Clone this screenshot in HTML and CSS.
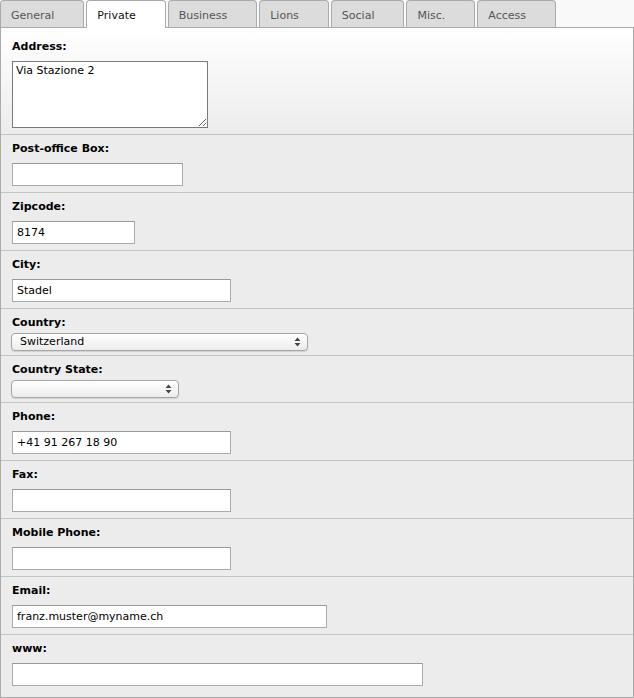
FILE: index.html
```html
<!DOCTYPE html>
<html>
<head>
<meta charset="utf-8">
<link rel="stylesheet" href="styles.css">
</head>
<body>
<div class="tabs">
  <div class="tab">General</div>
  <div class="tab active">Private</div>
  <div class="tab">Business</div>
  <div class="tab">Lions</div>
  <div class="tab">Social</div>
  <div class="tab">Misc.</div>
  <div class="tab">Access</div>
</div>
<div class="panel">
  <div class="row row-first">
    <label class="lbl">Address:</label>
    <textarea class="area">Via Stazione 2</textarea>
  </div>
  <div class="row">
    <label class="lbl">Post-office Box:</label>
    <input class="inp w-pob" type="text" value="">
  </div>
  <div class="row">
    <label class="lbl">Zipcode:</label>
    <input class="inp w-zip" type="text" value="8174">
  </div>
  <div class="row">
    <label class="lbl">City:</label>
    <input class="inp w-mid" type="text" value="Stadel">
  </div>
  <div class="row row-sel">
    <label class="lbl">Country:</label>
    <div class="sel w-country">
      <span class="sel-text">Switzerland</span>
      <svg class="sel-arrows" width="7" height="10" viewBox="0 0 7 10"><path d="M3.5 0.5 L6.5 4 L0.5 4 Z M0.5 6 L6.5 6 L3.5 9.5 Z" fill="#444"/></svg>
    </div>
  </div>
  <div class="row row-sel">
    <label class="lbl">Country State:</label>
    <div class="sel w-state">
      <span class="sel-text"></span>
      <svg class="sel-arrows" width="7" height="10" viewBox="0 0 7 10"><path d="M3.5 0.5 L6.5 4 L0.5 4 Z M0.5 6 L6.5 6 L3.5 9.5 Z" fill="#444"/></svg>
    </div>
  </div>
  <div class="row">
    <label class="lbl">Phone:</label>
    <input class="inp w-mid" type="text" value="+41 91 267 18 90">
  </div>
  <div class="row">
    <label class="lbl">Fax:</label>
    <input class="inp w-mid" type="text" value="">
  </div>
  <div class="row">
    <label class="lbl">Mobile Phone:</label>
    <input class="inp w-mid" type="text" value="">
  </div>
  <div class="row">
    <label class="lbl">Email:</label>
    <input class="inp w-email" type="text" value="franz.muster@myname.ch">
  </div>
  <div class="row row-last">
    <label class="lbl">www:</label>
    <input class="inp w-www" type="text" value="">
  </div>
</div>
</body>
</html>
```
FILE: styles.css
```css
html, body {
  margin: 0;
  padding: 0;
  background: #f9f9f9;
  font-family: "DejaVu Sans", Verdana, sans-serif;
  font-size: 11px;
}

.tabs {
  display: flex;
  align-items: flex-end;
  gap: 2px;
  height: 27px;
  padding-left: 0;
}

.tab {
  box-sizing: border-box;
  height: 27px;
  padding: 2px 29px 0 10px;
  border: 1px solid #aaa;
  border-bottom: none;
  border-radius: 4px 4px 0 0;
  background: #dcdcdc;
  color: #555;
  line-height: 25px;
  font-size: 11px;
}

.tab.active {
  position: relative;
  z-index: 2;
  height: 28px;
  margin-bottom: -1px;
  background: #fff;
  color: #111;
}

.panel {
  box-sizing: border-box;
  width: 634px;
  border: 1px solid #aaa;
  background: #ececec;
}

.row {
  display: flex;
  flex-direction: column;
  align-items: flex-start;
  padding: 7px 11px 6px 11px;
  border-top: 1px solid #c3c3c3;
}

.row-first {
  border-top: none;
  padding-top: 12px;
  background: linear-gradient(to bottom, #ffffff 0%, #ececec 100%);
}

.row-sel {
  padding-bottom: 4px;
}

.row-last {
  padding-bottom: 11px;
}

.lbl {
  display: block;
  font-weight: bold;
  font-size: 11px;
  line-height: 14px;
  color: #000;
  margin-bottom: 7px;
}

.row-sel .lbl {
  margin-bottom: 3px;
}

.inp {
  box-sizing: border-box;
  height: 23px;
  margin: 0;
  padding: 0 4px;
  border: 1px solid #aaa;
  border-top-color: #999;
  background: #fff;
  font-family: "DejaVu Sans", Verdana, sans-serif;
  font-size: 11px;
  color: #000;
  outline: none;
}

.area {
  box-sizing: border-box;
  width: 196px;
  height: 67px;
  margin: 0;
  padding: 2px 3px;
  border: 1px solid #7a7a7a;
  background: #fff;
  font-family: "DejaVu Sans", Verdana, sans-serif;
  font-size: 11px;
  line-height: 14px;
  color: #000;
  outline: none;
}

.w-pob { width: 171px; }
.w-zip { width: 123px; }
.w-mid { width: 219px; }
.w-email { width: 315px; }
.w-www { width: 411px; }

.sel {
  position: relative;
  box-sizing: border-box;
  height: 18px;
  margin-left: -1px;
  border: 1px solid #a6a6a6;
  border-radius: 4px;
  background: linear-gradient(to bottom, #ffffff 0%, #f6f6f6 50%, #ececec 100%);
  box-shadow: 0 1px 1px rgba(0, 0, 0, 0.12);
  display: flex;
  align-items: center;
}

.sel-text {
  padding-left: 8px;
  font-size: 11px;
  line-height: 16px;
  color: #000;
}

.sel-arrows {
  position: absolute;
  right: 6px;
  top: 3px;
}

.w-country { width: 297px; }
.w-state { width: 168px; }
```
